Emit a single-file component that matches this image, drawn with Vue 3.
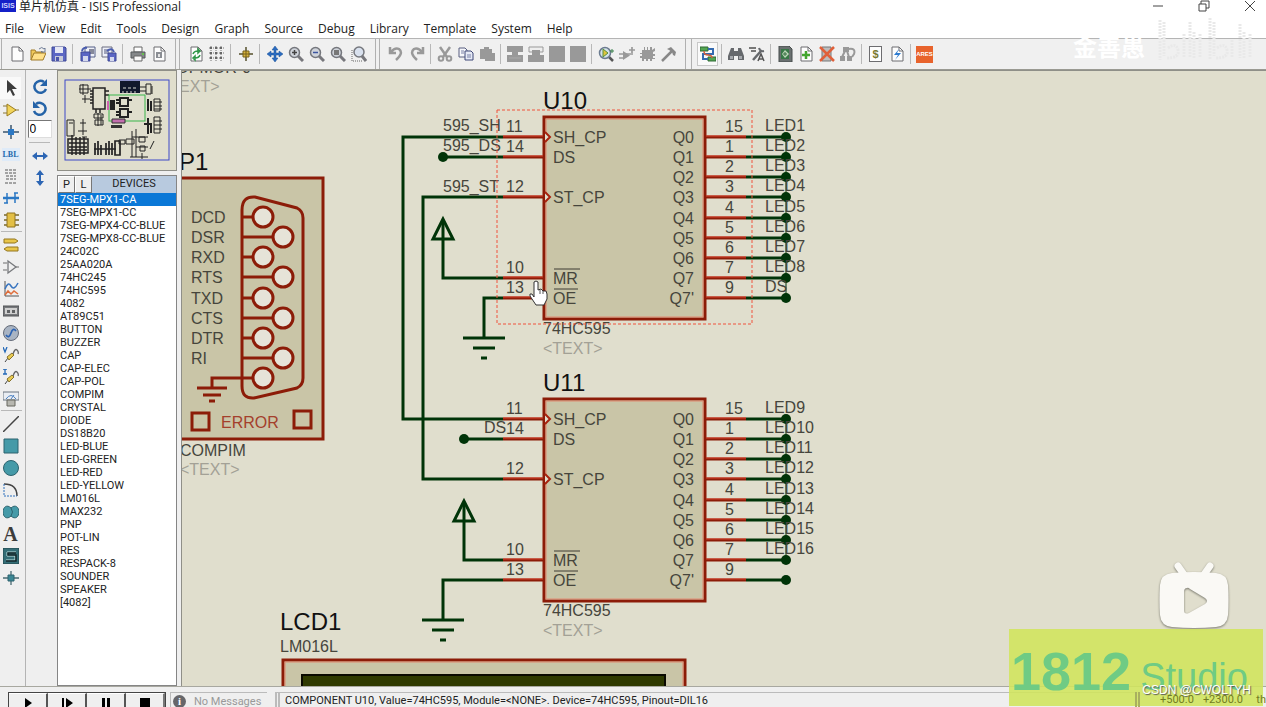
<script setup>
import { ref } from 'vue'

const menus = ['File', 'View', 'Edit', 'Tools', 'Design', 'Graph', 'Source', 'Debug', 'Library', 'Template', 'System', 'Help']

const page = '<path d="M3 1h7l4 4v10H3z" fill="#fdfdfd" stroke="#6d6d70"/><path d="M10 1v4h4" fill="none" stroke="#6d6d70"/>'
const lens = '<path d="M10 10l5 5" stroke="#77777c" stroke-width="3"/><circle cx="6.500" cy="6.500" r="5" fill="#cfd3da" stroke="#75777d" stroke-width="1.500"/>'
const icons = {
  new: page,
  open: '<path d="M1 14V4h4l1 2h7v2" fill="#f0c95a" stroke="#a07a28"/><path d="M1 14l3-7h12l-3 7z" fill="#ffe08a" stroke="#a07a28"/><path d="M9 3q3-3 5 0l1-1v4h-4l1-1" fill="none" stroke="#6f7c96"/>',
  save: '<path d="M1 1h13l1 1v13H1z" fill="#5b66c4" stroke="#3f4895"/><path d="M4 1h8v6H4z" fill="#e6e8f4"/><path d="M4 10h8v5H4z" fill="#c7cad8"/><path d="M5 11h3v4H5z" fill="#4b55a8"/>',
  import: '<path d="M5 1h10v10H5z" fill="#eef0f8" stroke="#555e86"/><path d="M9 3h5v5H9z" fill="#86899a"/><path d="M1 6h9v9H1z" fill="#5b66c4" stroke="#3f4895"/><path d="M3 10h5v5H3z" fill="#d5d9ee"/><path d="M2 5q1-4 5-3" fill="none" stroke="#4a5cae" stroke-width="2"/>',
  export: '<path d="M1 1h10v10H1z" fill="#eef0f8" stroke="#6a6d80"/><path d="M3 3h5v5H3z" fill="#9fa3ba"/><path d="M7 7h8v8H7z" fill="#5b66c4" stroke="#3f4895"/><path d="M9 11h4v4H9z" fill="#d5d9ee"/><path d="M6 5q5-4 7 1" fill="none" stroke="#4a5cae" stroke-width="2"/>',
  print: '<path d="M4 1h8v5H4z" fill="#fff" stroke="#666"/><path d="M1 6h14v6H1z" fill="#85888a" stroke="#55585a"/><path d="M4 10h8v5H4z" fill="#fafafa" stroke="#666"/><path d="M12 7h2v2h-2z" fill="#66c04e"/>',
  area: page + '<path d="M5 6h6v6H5z" fill="#8b8e94"/><path d="M7 8h2v3H7z" fill="#e4e4e4"/>',
  refresh: page + '<path d="M5 8q1-3 5-3M10 3v4l2-2zM12 9q-1 3-5 3M7 10v4l-2-2z" fill="none" stroke="#2f9648" stroke-width="1.500"/>',
  grid: '<path d="M2 0v16M7 0v16M12 0v16M0 2h16M0 7h16M0 12h16" stroke="#777" stroke-dasharray="1 1" stroke-width="1"/><path d="M1 1h2v2H1zM6 1h2v2H6zM11 1h2v2h-2zM1 6h2v2H1zM6 6h2v2H6zM11 6h2v2h-2zM1 11h2v2H1zM6 11h2v2H6zM11 11h2v2h-2z" fill="#666"/>',
  origin: '<path d="M8 1v14M1 8h14" stroke="#55502c" stroke-width="1.500"/><path d="M5 5h6v6H5z" fill="#d8b43c" stroke="#77601c"/><path d="M8 5v6M5 8h6" stroke="#77601c"/>',
  pan: '<path d="M8 0l3 4H9v3h3V5l4 3-4 3V9H9v3h2l-3 4-3-4h2V9H4v2L0 8l4-3v2h3V4H5z" fill="#2a6bc0" stroke="#1f5499" stroke-width=".5"/>',
  zoomin: lens + '<path d="M4 6.500h5M6.500 4v5" stroke="#444" stroke-width="1.500"/>',
  zoomout: lens + '<path d="M4 6.500h5" stroke="#3c55a0" stroke-width="1.500"/>',
  zoomall: lens + '<path d="M4 4h5v5H4z" fill="#777"/>',
  zoomarea: '<path d="M1 4v11h10" fill="none" stroke="#666" stroke-dasharray="1 1"/><path d="M11 10l4 5" stroke="#77777c" stroke-width="3"/><circle cx="8" cy="6" r="5" fill="#d9e1ee" stroke="#75777d" stroke-width="1.500"/>',
  undo: '<path d="M2 1v6h6M3 6q4-5 8-3 5 4-3 11" fill="none" stroke="#999" stroke-width="2.500"/>',
  redo: '<path d="M14 1v6H8M13 6Q9 1 5 3q-5 4 3 11" fill="none" stroke="#999" stroke-width="2.500"/>',
  cut: '<path d="M3 1l7 10M13 1L6 11" stroke="#999" stroke-width="2.500"/><circle cx="4" cy="12.500" r="2.300" fill="none" stroke="#999" stroke-width="2"/><circle cx="12" cy="12.500" r="2.300" fill="none" stroke="#999" stroke-width="2"/>',
  copy: '<path d="M1 2h6l2 2v7H1z" fill="#f6f7fb" stroke="#585f80"/><path d="M7 5h6l2 2v7H7z" fill="#e6eaf6" stroke="#3f4878"/><path d="M3 5h3M3 7h3M9 9h4M9 11h4" stroke="#7a82a8"/>',
  paste: '<path d="M1 3h4V1h5v2h3v4h3v8H6v-2H1z" fill="#999"/>',
  blockcopy: '<path d="M0 0h16v6h-5v3h5v7H0V9h5V6H0z" fill="#999"/><path d="M2 12h12" stroke="#aaa"/>',
  blockmove: '<path d="M1 1h14v5H1z" fill="#eee" stroke="#999"/><path d="M4 4h8v5H4zM0 9h16v7H0z" fill="#999"/>',
  block: '<path d="M0 0h16v16H0z" fill="#999"/>',
  pick: '<path d="M11 11l4 4" stroke="#555" stroke-width="2.500"/><circle cx="7" cy="7" r="5.500" fill="#d5e2ea" stroke="#6b7b90" stroke-width="1.500"/><path d="M5 3v8l5-4z" fill="#e0c43c" stroke="#568f3c"/><path d="M12 5h4M14 3v4" stroke="#39804a"/>',
  make: '<path d="M4 5v9l7-4.500z" fill="#999"/><path d="M0 8h14M0 12h5M10 4h6M13 1v6" stroke="#999" stroke-width="1.700"/>',
  chip: '<path d="M2 4h2V1h1v3h2V1h1v3h2V1h2v3l3-2v3l-2 1v2h2v2h-2v2h2v1h-3v2h-2v-2H8v2H6v-2H4v2H2v-3H0v-2h2v-2H0V7h2z" fill="#999"/>',
  hammer: '<path d="M1 15L11 5" stroke="#888" stroke-width="2.500"/><path d="M6 3l4-2 5 5-1 4-2-1-1-3-3-2z" fill="#888"/>',
  wire: '<path d="M0 1h8v4H0zM8 11h8v4H8z" fill="#54a552" stroke="#2e6a34"/><path d="M8 3h5v5H3v5h5" fill="none" stroke="#356bb0" stroke-width="2"/><path d="M4 5q0 4 4 4t4 3" fill="none" stroke="#d2603c" stroke-width="1.500"/>',
  find: '<path d="M3 2h3v3h4V2h3l3 8v4h-6v-4H6v4H0v-4z" fill="#66696d"/><path d="M2 10h3v3H2zM11 10h3v3h-3z" fill="#a6a9ad"/>',
  prop: '<path d="M0 2h7M2 5h5" stroke="#777" stroke-width="2"/><path d="M4 14l8-9" stroke="#66696d" stroke-width="2.500"/><path d="M10 2q1 4 5 3" fill="none" stroke="#66696d" stroke-width="2"/><path d="M9 15l3-7 3 7M10 13h4" fill="none" stroke="#555" stroke-width="1.500"/>',
  sheet: '<path d="M2 0h10l3 3v13H2z" fill="#6a7070" stroke="#474d4c"/><path d="M4 3h8v10H4z" fill="#387848"/><path d="M5 8l3-4 4 4-4 4z" fill="#bcd7b8"/><path d="M6 8h4M8 6v4" stroke="#376d42"/>',
  addsheet: page + '<path d="M4 9h8M8 5v8" stroke="#43a530" stroke-width="2.500"/>',
  delsheet: '<path d="M3 1h9v14H3z" fill="#bdbdbd" stroke="#777"/><path d="M1 1l14 14M15 1L1 15" stroke="#e0603a" stroke-width="2.500"/>',
  tree: '<path d="M3 1h6v5H3zM0 10h5v5H0zM7 10h5v5H7z" fill="#999"/><path d="M5 5l-3 6M7 5l2 6M9 3q7-1 5 5l-2 3" fill="none" stroke="#999" stroke-width="2"/>',
  erc: page + '<path d="M10 3L5 9h4l-3 5 6-7H8z" fill="#2c7bd0"/>',
  cursor: '<path d="M4 0v13l3-3 3 6 2-1-3-6h5z" fill="#3c3c3c"/>',
  component: '<path d="M0 4h4M0 11h4M12 8h4" stroke="#8a7634"/><path d="M4 2v12l9-6z" fill="#f2d45a" stroke="#9a7c20"/>',
  junction: '<path d="M8 1v14M0 8h16" stroke="#3b556d" stroke-width="1.500"/><path d="M5 5h6v6H5z" fill="#2b78c4"/>',
  script: '<path d="M2 2h12M2 5h12M3 8h10M3 11h10M2 15h12" stroke="#8b8b8b" stroke-width="1.700" stroke-dasharray="3 1"/>',
  bus: '<path d="M0 8h16" stroke="#2b78c4" stroke-width="2.500"/><path d="M4 3v10M12 3v10M1 13h4M11 3h4" stroke="#2b78c4" stroke-width="1.500"/>',
  sub: '<path d="M1 3h3M1 8h3M1 13h3M12 3h4M12 8h4M12 13h4" stroke="#7b6a2a" stroke-width="1.500"/><path d="M4 1h8v14H4z" fill="#e3bf45" stroke="#917420"/>',
  terminal: '<path d="M1 2h11l3 2-3 2H1zM4 10h11v4H4l-3-2z" fill="#e9c64a" stroke="#94771f"/>',
  pin: '<path d="M0 4h4M0 11h4M12 8h4" stroke="#999" stroke-width="1.500"/><path d="M5 2v12l8-6z" fill="none" stroke="#77797c" stroke-width="1.300"/>',
  graph: '<path d="M2 0v15h14" fill="none" stroke="#555"/><path d="M2 8q3-8 6-3t7-3" fill="none" stroke="#3875c0" stroke-width="1.500"/><path d="M2 14l3-4 3 3 3-3 4 3" fill="none" stroke="#df6e3c" stroke-width="1.500"/>',
  tape: '<path d="M0 3h16v10H0z" fill="#77797c" stroke="#505254"/><path d="M2 5h12v6H2z" fill="#d0d0d0"/><path d="M4 7h3v3H4zM9 7h3v3H9z" fill="#606264"/>',
  generator: '<circle cx="8" cy="8" r="7.500" fill="#a9b4c3" stroke="#646b78"/><path d="M3 10q3 4 5-2t5-2" fill="none" stroke="#2b63b4" stroke-width="1.700"/>',
  voltage: '<path d="M0 0l2 5 2-5" fill="none" stroke="#2268b8" stroke-width="1.300"/><path d="M2 15l3-4" stroke="#444"/><path d="M4 10l5-4 2 2-5 5z" fill="#e8ca52" stroke="#88732a"/><path d="M10 7q2-6 4-4t1 4" fill="none" stroke="#666" stroke-width="1.300"/>',
  current: '<path d="M0 0h4M2 0v5M0 5h4" fill="none" stroke="#2268b8" stroke-width="1.300"/><path d="M2 15l3-4" stroke="#444"/><path d="M4 10l5-4 2 2-5 5z" fill="#e8ca52" stroke="#88732a"/><path d="M10 7q2-6 4-4t1 4" fill="none" stroke="#666" stroke-width="1.300"/>',
  meter: '<path d="M0 1h16v8H0z" fill="#e9edf3" stroke="#6b7480"/><path d="M3 8q5-7 10 0M8 8l3-4" fill="none" stroke="#4a80c2"/><path d="M4 9h8v6H4z" fill="#b7b7b0" stroke="#66665f"/>',
  line: '<path d="M0 16L16 0" stroke="#444" stroke-width="1.500"/>',
  box: '<path d="M1 1h14v14H1z" fill="#459aa8" stroke="#2d636e"/>',
  circle: '<circle cx="8" cy="8" r="7.500" fill="#459aa8" stroke="#2d636e"/>',
  arc: '<path d="M1 2q13 0 13 12" fill="none" stroke="#444" stroke-width="1.500"/><path d="M1 2v12h13" fill="none" stroke="#2f70bc" stroke-dasharray="2 1"/>',
  path: '<path d="M8 4C4 0 0 3 0 8s4 8 8 4c4 4 8 1 8-4s-4-8-8-4z" fill="#459aa8" stroke="#2d636e"/><path d="M8 4q3 4 0 8" fill="none" stroke="#2d636e"/>',
  symbol: '<path d="M0 0h16v16H0z" fill="#356e77" stroke="#23474d"/><path d="M13 4H4v4h8v4H3" fill="none" stroke="#bfe0e0" stroke-width="1"/><path d="M13 5H5v2h8v6H3" fill="none" stroke="#14292c" stroke-width="1.500"/>',
  marker: '<path d="M8 1v14M0 8h16" stroke="#4b6b73" stroke-width="1.300"/><path d="M5 5h6v6H5z" fill="#3c8794" stroke="#2d636e"/>',
  cw: '<path d="M14 10a6 6 0 1 1-2-7" fill="none" stroke="#2563a8" stroke-width="2.500"/><path d="M15 0v7H8z" fill="#2563a8"/>',
  ccw: '<path d="M2 10a6 6 0 1 0 2-7" fill="none" stroke="#2563a8" stroke-width="2.500"/><path d="M1 0v7h7z" fill="#2563a8"/>',
  flipx: '<path d="M0 8l5-4v3h6V4l5 4-5 4V9H5v3z" fill="#2d66b4"/>',
  flipy: '<path d="M8 0l4 5H9v6h3l-4 5-4-5h3V5H4z" fill="#2d66b4"/>',
}
const glyphs = { bom: '$', ares: 'ARES', label: 'LBL', text: 'A' }

const toolbars = [
  { name: 'File', groups: [['new', 'open', 'save'], ['import', 'export'], ['print', 'area']] },
  { name: 'View', groups: [['refresh', 'grid'], ['origin'], ['pan', 'zoomin', 'zoomout', 'zoomall', 'zoomarea']] },
  { name: 'Edit', tight: true, groups: [['undo', 'redo'], ['cut', 'copy', 'paste'], ['blockcopy', 'blockmove', 'block', 'block'], ['pick', 'make', 'chip', 'hammer']] },
  { name: 'Design', tight: true, groups: [['wire'], ['find', 'prop'], ['sheet', 'addsheet', 'delsheet', 'tree'], ['bom', 'erc'], ['ares']] },
]
const modes = [
  ['cursor', 'component', 'junction', 'label', 'script', 'bus', 'sub'],
  ['terminal', 'pin', 'graph', 'tape', 'generator', 'voltage', 'current', 'meter'],
  ['line', 'box', 'circle', 'arc', 'path', 'text', 'symbol', 'marker'],
]
const devices = ['7SEG-MPX1-CA', '7SEG-MPX1-CC', '7SEG-MPX4-CC-BLUE', '7SEG-MPX8-CC-BLUE', '24C02C', '25AA020A', '74HC245', '74HC595', '4082', 'AT89C51', 'BUTTON', 'BUZZER', 'CAP', 'CAP-ELEC', 'CAP-POL', 'COMPIM', 'CRYSTAL', 'DIODE', 'DS18B20', 'LED-BLUE', 'LED-GREEN', 'LED-RED', 'LED-YELLOW', 'LM016L', 'MAX232', 'PNP', 'POT-LIN', 'RES', 'RESPACK-8', 'SOUNDER', 'SPEAKER', '[4082]']
const selected = ref('7SEG-MPX1-CA')
const angle = ref('0')

const rows = [0, 20, 40, 60, 81, 101, 121, 141, 161]
const outPins = ['15', '1', '2', '3', '4', '5', '6', '7', '9']
const outNames = ['Q0', 'Q1', 'Q2', 'Q3', 'Q4', 'Q5', 'Q6', 'Q7', "Q7'"]
const inPins = [
  { row: 0, num: '11', name: 'SH_CP', clock: true },
  { row: 1, num: '14', name: 'DS' },
  { row: 3, num: '12', name: 'ST_CP', clock: true },
  { row: 7, num: '10', name: 'MR', bar: 26 },
  { row: 8, num: '13', name: 'OE', bar: 24 },
]
const chips = [
  { ref: 'U10', y: 137, nets: ['LED1', 'LED2', 'LED3', 'LED4', 'LED5', 'LED6', 'LED7', 'LED8', 'DS'] },
  { ref: 'U11', y: 419, nets: ['LED9', 'LED10', 'LED11', 'LED12', 'LED13', 'LED14', 'LED15', 'LED16', ''] },
]
const serial = ['DCD', 'DSR', 'RXD', 'RTS', 'TXD', 'CTS', 'DTR', 'RI', ''].map((name, i) => ({
  name,
  y: 217 + rows[i],
  x: i % 2 ? 283 : 263,
}))
const grounds = [{ x: 484, y: 338 }, { x: 443, y: 620 }]
const powers = [{ x: 443, y: 218 }, { x: 464, y: 500 }]
const strokes = ['M1160 20v40', 'M1164 22v34', 'M1168 48q8-6 10 2t-12 8', 'M1184 34v24', 'M1190 22v36', 'M1194 32v26', 'M1200 34v24', 'M1210 18v42', 'M1214 22v34', 'M1217 48q8-6 10 2t-12 8', 'M1232 40v18', 'M1240 24v34', 'M1244 32v26', 'M1250 34v24']
</script>

<template>
  <div class="app">
    <header class="title">
      <span class="logo">ISIS</span>
      <h1>单片机仿真 - ISIS Professional</h1>
      <div class="controls">
        <button aria-label="Minimize"><svg viewBox="0 0 14 14"><path d="M2 6h10" /></svg></button>
        <button aria-label="Restore"><svg viewBox="0 0 14 14"><path d="M2 4h7v7H2zM4 4V1h8v7H9" /></svg></button>
        <button aria-label="Close"><svg viewBox="0 0 14 14"><path d="M2 1l10 10M12 1L2 11" /></svg></button>
      </div>
    </header>

    <nav class="menu">
      <button v-for="m in menus" :key="m">{{ m }}</button>
    </nav>

    <div class="toolbars">
      <div v-for="bar in toolbars" :key="bar.name" class="bar" :class="{ tight: bar.tight }" role="toolbar" :aria-label="bar.name">
        <div v-for="(g, gi) in bar.groups" :key="gi" class="group">
          <button v-for="(n, i) in g" :key="i" class="tool" :class="{ pressed: n === 'wire' }" :aria-label="n">
            <svg v-if="icons[n]" viewBox="0 0 16 16" v-html="icons[n]" />
            <span v-else class="glyph" :class="n">{{ glyphs[n] }}</span>
          </button>
        </div>
      </div>
    </div>

    <main class="work">
      <aside class="modes">
        <div v-for="(g, gi) in modes" :key="gi" class="mode-group">
          <button v-for="n in g" :key="n" class="mode" :class="{ pressed: n === 'cursor' }" :aria-label="n">
            <svg v-if="icons[n]" viewBox="0 0 16 16" v-html="icons[n]" />
            <span v-else class="glyph" :class="n">{{ glyphs[n] }}</span>
          </button>
        </div>
      </aside>

      <aside class="orient">
        <button aria-label="Rotate clockwise"><svg viewBox="0 0 16 16" v-html="icons.cw" /></button>
        <button aria-label="Rotate anticlockwise"><svg viewBox="0 0 16 16" v-html="icons.ccw" /></button>
        <input v-model="angle" aria-label="Rotation angle" />
        <hr />
        <button aria-label="Mirror horizontally"><svg viewBox="0 0 16 16" v-html="icons.flipx" /></button>
        <button aria-label="Mirror vertically"><svg viewBox="0 0 16 16" v-html="icons.flipy" /></button>
      </aside>

      <aside class="side">
        <div class="overview">
          <svg viewBox="0 0 118 98">
            <rect x="7" y="9" width="104" height="80" fill="none" stroke="#3c48c8" />
            <g fill="none" stroke="#222" stroke-width="1">
              <path d="M22 14h8v8h-8zM25 13v11M21 18h12M27 24v8M24 28h8" />
              <path d="M35 17h12v21H35zM32 20h3M32 23h3M32 26h3M32 29h3M32 32h3M38 38v4M42 38v4M47 20h4M47 24h4" stroke-width="1.500" />
              <path d="M88 13h5v10h-5zM81 16h7M81 20h7M94 15v8" />
              <path d="M62 27h8v8h-8zM62 38h8v8h-8zM58 29h4M58 32h4M58 41h4M58 44h4M70 29h4M70 41h4" stroke-width="2" />
              <path d="M90 28v12M93 30v10M90 47v16M93 52v10M86 53h6" stroke-width="2" />
              <path d="M96 28h6v12h-6zM96 46h6v16h-6zM96 31h8M96 35h8M96 38h8M96 50h8M96 54h8M96 58h8" stroke-width="1" />
              <path d="M36 43h9v4h-9zM37 49h8v5h-8zM40 42v13M43 44v10" />
              <path d="M9 49h7v16H9zM11 52h4M22 52h6M25 48v16M20 60h9M24 66h5" />
              <path d="M10 68h20v14H10zM11 72h18M11 76h18M11 79h18M14 64v20M18 66v18M22 66v18M26 66v18" stroke-width="1.500" />
              <path d="M37 72v12M40 70v14M43 74v10M48 72v12M51 70v14M54 72v12M36 78h22M57 70h5v14h-5z" stroke-width="1.700" />
              <path d="M61 69h6v4h-6zM68 68h8v5h-8zM74 60v26M78 58v28M74 66h16M78 76h12M81 66h6v5h-6zM82 75h5v5h-5zM72 86h18M84 82v6M92 78l4-8" />
            </g>
            <path d="M62 10h20v12H62z" fill="#11182c" />
            <path d="M65 17h3M70 17h3M75 17h3M64 21h2M68 21h2M72 21h2M76 21h2" stroke="#d8d8d0" />
            <path d="M52 29h5v10h-5z" fill="#222" />
            <rect x="51" y="24" width="36" height="26" fill="none" stroke="#39b54a" />
            <path d="M50 30v9" stroke="#cf62b2" stroke-width="2" />
            <path d="M54 48h13v4H54z" fill="#c26fae" stroke="#333" />
            <path d="M53 54h11v3H53z" fill="#333" />
          </svg>
        </div>
        <section class="devices">
          <div class="devices-head">
            <button>P</button>
            <button>L</button>
            <h2>DEVICES</h2>
          </div>
          <ul role="listbox" aria-label="Devices">
            <li v-for="d in devices" :key="d" role="option" :aria-selected="d === selected" :class="{ on: d === selected }" @click="selected = d">{{ d }}</li>
          </ul>
        </section>
      </aside>

      <section class="canvas">
        <svg class="sheet">
          <g transform="translate(-182 -71)">
            <text class="net" x="251" y="73" text-anchor="end">COPMOR-0</text>
            <text class="ghost" x="160" y="92">&lt;TEXT&gt;</text>

            <text class="ref" x="179" y="170">P1</text>
            <rect class="body" x="170" y="178" width="153" height="261" />
            <path class="pin" fill="none" d="M242 386V210q0-14 13-13l42 11q6 3 6 10v160q0 7-6 10l-43 10q-12 1-12-12z" />
            <g v-for="s in serial" :key="s.y">
              <path class="pin" :d="`M242 ${s.y}H${s.x - 10}`" />
              <circle class="hole" :cx="s.x" :cy="s.y" r="10" />
              <text class="net" x="191" :y="s.y + 6">{{ s.name }}</text>
            </g>
            <path class="pin" fill="none" d="M242 378H212V388M197 388h30M203 395h18M209 401h6" />
            <rect class="body" x="192" y="413" width="17" height="17" />
            <rect class="body" x="294" y="411" width="17" height="17" />
            <text class="error" x="221" y="428">ERROR</text>
            <text class="net" x="180" y="456">COMPIM</text>
            <text class="ghost" x="180" y="475">&lt;TEXT&gt;</text>

            <path class="wire" d="M503 137H403V419H503M503 197H423V479H503M443 157H503M464 439H503" />
            <path class="wire" d="M443 220V278H503M503 298H484V338M464 502V560H503M503 580H443V620" />
            <path v-for="g in grounds" :key="g.x" class="wire" :d="`M${g.x - 21} ${g.y}h42M${g.x - 11} ${g.y + 10}h22M${g.x - 3} ${g.y + 20}h6`" />
            <path v-for="p in powers" :key="p.x" class="wire" :d="`M${p.x} ${p.y + 1}l-10 20h20z`" />
            <circle class="dot" cx="443" cy="157" r="5" />
            <circle class="dot" cx="464" cy="439" r="5" />
            <text class="net" x="443" y="131">595_SH</text>
            <text class="net" x="443" y="151">595_DS</text>
            <text class="net" x="443" y="192">595_ST</text>
            <text class="net" x="484" y="433">DS</text>
            <path class="thin" d="M786 137V298M786 419V560" />

            <g v-for="c in chips" :key="c.ref">
              <text class="ref" x="543" :y="c.y - 28">{{ c.ref }}</text>
              <rect class="body" x="544" :y="c.y - 20" width="161" height="202" />
              <rect class="glow" x="546" :y="c.y - 18" width="157" height="198" />
              <g v-for="p in inPins" :key="p.num">
                <path class="pin" :d="`M503 ${c.y + rows[p.row]}H543`" />
                <path class="shine" :d="`M503 ${c.y + rows[p.row] - 1}H543`" />
                <path v-if="p.clock" class="clock" :d="`M545 ${c.y + rows[p.row] - 5}l5 5-5 5`" />
                <text class="net" x="506" :y="c.y + rows[p.row] - 5">{{ p.num }}</text>
                <text class="net" x="553" :y="c.y + rows[p.row] + 6">{{ p.name }}</text>
                <path v-if="p.bar" class="over" :d="`M554 ${c.y + rows[p.row] - 9}h${p.bar}`" />
              </g>
              <g v-for="(r, i) in rows" :key="r">
                <path class="pin" :d="`M706 ${c.y + r}H746`" />
                <path class="shine" :d="`M706 ${c.y + r - 1}H746`" />
                <path class="wire" :d="`M746 ${c.y + r}H786`" />
                <circle class="dot" cx="786" :cy="c.y + r" r="5" />
                <text class="net" x="725" :y="c.y + r - 5">{{ outPins[i] }}</text>
                <text class="net" x="694" :y="c.y + r + 6" text-anchor="end">{{ outNames[i] }}</text>
                <text class="net" x="765" :y="c.y + r - 6">{{ c.nets[i] }}</text>
              </g>
              <text class="net" x="543" :y="c.y + 197">74HC595</text>
              <text class="ghost" x="543" :y="c.y + 217">&lt;TEXT&gt;</text>
            </g>
            <rect class="select" x="497" y="110" width="255" height="214" />

            <text class="ref" x="280" y="630">LCD1</text>
            <text class="net" x="280" y="652">LM016L</text>
            <rect class="body" x="283" y="660" width="402" height="160" />
            <rect class="glow" x="285" y="662" width="398" height="156" />
            <rect x="302" y="675" width="363" height="60" fill="#2f3a00" stroke="#0a0a00" stroke-width="2" />

            <path d="M534 282q2-2 4 0v8l3-1 2 2 3 0 1 3v5l-3 6h-8l-6-9q-1-3 2-2l2 3z" fill="#fff" stroke="#333" />
            <path d="M540 290v4M543 291v3" stroke="#555" />
          </g>
        </svg>
      </section>
    </main>

    <footer class="status">
      <div class="sim">
        <button aria-label="Play"><svg viewBox="0 0 16 12"><path d="M5 1l7 5-7 5z" /></svg></button>
        <button aria-label="Step"><svg viewBox="0 0 16 12"><path d="M3 1h2v10H3zM7 1l7 5-7 5z" /></svg></button>
        <button aria-label="Pause"><svg viewBox="0 0 16 12"><path d="M4 1h3v10H4zM9 1h3v10H9z" /></svg></button>
        <button aria-label="Stop"><svg viewBox="0 0 16 12"><path d="M3 1h10v10H3z" /></svg></button>
      </div>
      <div class="messages"><span class="info">i</span>No Messages</div>
      <div class="hint">COMPONENT U10, Value=74HC595, Module=&lt;NONE&gt;. Device=74HC595, Pinout=DIL16</div>
      <div class="coords"><span>+500.0</span><span>+2300.0</span><span class="unit">th</span></div>
    </footer>

    <div class="channel">
      <span>金善愚</span>
    </div>
    <svg class="scribble" viewBox="1156 16 100 46"><path v-for="s in strokes" :key="s" :d="s" /></svg>
    <svg class="tv" viewBox="0 0 76 72">
      <path d="M22 7l7 10M54 7l-7 10" stroke="#faf9f5" stroke-width="7" stroke-linecap="round" />
      <path fill-rule="evenodd" fill="#faf9f5" d="M16 14Q38 12 60 14Q71 15 72 26Q73 41 72 56Q71 67 60 68Q38 70 16 68Q5 67 4 56Q3 41 4 26Q5 15 16 14zM31 29Q28 29 28 33V51Q28 56 33 54L49 45Q53 42 49 39L34 30Q32 28 31 29z" />
    </svg>
    <div class="studio"><b>1812</b><span>Studio</span></div>
    <div class="credit">CSDN @CWOLTYH</div>
  </div>
</template>

<style>
body { margin: 0; overflow: hidden; }
</style>

<style scoped>
.app { position: relative; display: flex; flex-direction: column; height: 100vh; overflow: hidden; background: #efefef; color: #222; font-family: "Liberation Sans", "Noto Sans CJK SC", sans-serif; font-size: 12px; }
button { padding: 0; border: 0; background: none; font: inherit; color: inherit; }
h1, h2, ul { margin: 0; padding: 0; font-weight: 400; }

.title { display: flex; align-items: flex-start; height: 18px; background: #fff; font-family: "Open Sans", "Noto Sans CJK SC", sans-serif; }
.logo { width: 16px; height: 12px; background: #1420c8; color: #cfd4ff; font: 700 7px/12px "Liberation Sans", sans-serif; text-align: center; }
.title h1 { flex: 1; margin-left: 3px; font-size: 12px; line-height: 13px; }
.controls { display: flex; gap: 32px; padding-right: 9px; }
.controls button { width: 14px; height: 14px; }
.controls svg { display: block; width: 14px; height: 14px; fill: none; stroke: #444; }

.menu { display: flex; align-items: center; gap: 15px; height: 20px; padding-left: 5px; background: #fff; font-family: "Open Sans", sans-serif; font-size: 12px; }

.toolbars { display: flex; height: 30px; border-top: 1px solid #b4b4b4; border-bottom: 1px solid #9a9a92; background: #f0f0f0; }
.bar { display: flex; align-items: center; padding: 0 6px 0 5px; border-left: 1px solid #b0b0b0; margin-left: 3px; border-right: 1px solid #b0b0b0; }
.bar:first-child { margin-left: 1px; padding-left: 4px; }
.bar.tight + .bar.tight { margin-left: 5px; }
.bar:last-child { border-right: 0; }
.group { display: flex; align-items: center; }
.group + .group::before { content: ""; width: 1px; height: 20px; margin: 0 4px 0 3px; background: #b8b8b8; }
.tight .group + .group::before { margin: 0 3px; }
.tool { display: flex; align-items: center; justify-content: center; width: 21px; height: 24px; }
.tool svg { width: 16px; height: 16px; }
.tool.pressed { border: 1px solid #c8c8c8; box-sizing: border-box; background: #fafafa; }
.glyph { text-align: center; }
.ares { width: 17px; height: 17px; background: #e8632c; color: #fff; font: 700 6px/17px "Liberation Sans", sans-serif; }
.bom { width: 11px; height: 14px; border: 1px solid #6d6d70; background: #fdfdfd; color: #7a7a30; font: 700 11px/14px "Liberation Sans", sans-serif; }
.label { width: 18px; height: 13px; background: #dfebf8; color: #2369ad; font: 700 8px/13px "Liberation Serif", serif; }
.text { width: 18px; height: 22px; color: #3c3c3c; font: 700 20px/22px "Liberation Serif", serif; }

.work { display: flex; flex: 1; min-height: 0; }
.modes { width: 25px; padding-top: 7px; border-right: 1px solid #b4b4b4; }
.mode-group + .mode-group::before { content: ""; display: block; height: 1px; margin: 0 3px 2px 1px; background: #b8b8b8; }
.mode { display: flex; align-items: center; justify-content: center; width: 21px; height: 22px; }
.mode svg { width: 16px; height: 16px; }
.mode.pressed { background: #f9f9f9; }

.orient { display: flex; flex-direction: column; align-items: center; box-sizing: border-box; width: 31px; padding: 6px 4px 0 0; }
.orient button { height: 22px; }
.orient svg { display: block; width: 16px; height: 16px; margin: 3px 0; }
.orient input { box-sizing: border-box; width: 24px; height: 18px; padding: 0 1px; border: 1px solid #777; border-right-color: #ddd; border-bottom-color: #ddd; border-radius: 0; background: #fff; font: 12px "Liberation Sans", sans-serif; }
.orient hr { width: 21px; height: 1px; margin: 4px 0 2px; border: 0; background: #b8b8b8; }

.side { display: flex; flex-direction: column; gap: 4px; width: 120px; margin-right: 4px; }
.overview { height: 99px; border: 1px solid #8f8f88; background: #e0decd; }
.overview svg { display: block; width: 118px; height: 98px; }
.devices { display: flex; flex: 1; flex-direction: column; min-height: 0; border: 1px solid #858585; background: #fff; font-family: Roboto, sans-serif; font-size: 11px; }
.devices-head { display: flex; height: 17px; background: #b8cadf; }
.devices-head button { box-sizing: border-box; width: 17px; border: 1px solid #fff; border-right-color: #777; border-bottom-color: #777; background: #efefef; }
.devices-head h2 { flex: 1; font-size: 11px; line-height: 16px; text-align: center; }
.devices ul { flex: 1; list-style: none; overflow: hidden; }
.devices li { height: 13px; padding-left: 2px; line-height: 13px; white-space: nowrap; }
.devices li.on { background: #0b78d7; color: #fff; }

.canvas { flex: 1; min-width: 0; border-top: 1px solid #8f8f88; border-left: 1px solid #8f8f88; background: #e0decd; box-sizing: border-box; }
.sheet { display: block; width: 100%; height: 100%; overflow: hidden; font-family: "Liberation Sans", sans-serif; }
.net { fill: #46453c; font-size: 16px; }
.ghost { fill: #a3a196; font-size: 16px; }
.ref { fill: #111; font-size: 24px; }
.error { fill: #a4402c; font-size: 16px; }
.body { fill: #c9c5a7; stroke: #8c1c08; stroke-width: 3; }
.glow { fill: none; stroke: #e08a70; stroke-width: 1; }
.pin { stroke: #8c1c08; stroke-width: 3; }
.shine { stroke: #d8402a; stroke-width: 1; }
.clock { fill: #e0decd; stroke: #a8220e; stroke-width: 2; }
.hole { fill: #e6e3d8; stroke: #8c1c08; stroke-width: 3; }
.wire { fill: none; stroke: #003408; stroke-width: 3; }
.thin { stroke: #003408; stroke-width: 1; }
.dot { fill: #003408; }
.over { stroke: #3c3b33; stroke-width: 1; }
.select { fill: none; stroke: #f0523c; stroke-width: 1; stroke-dasharray: 3 2; }

.status { display: flex; box-sizing: border-box; height: 21px; padding: 5px 0 0 8px; border-top: 1px solid #a8a8a0; font-family: Roboto, sans-serif; font-size: 11px; }
.sim { display: flex; border: 1px solid #444; border-bottom: 0; }
.sim button { display: flex; align-items: center; justify-content: center; width: 39px; height: 18px; box-sizing: border-box; border-top: 1px solid #fff; border-right: 2px solid #555; }
.sim button:last-child { border-right-color: #777; }
.sim svg { width: 16px; height: 12px; fill: #000; }
.messages { display: flex; align-items: center; gap: 8px; box-sizing: border-box; width: 97px; margin-left: 4px; padding: 2px 0 0 2px; border-top: 1px solid #bbb; border-left: 1px solid #bbb; color: #999; white-space: nowrap; }
.info { width: 13px; height: 13px; border-radius: 7px; background: #66666a; color: #fff; font: 700 11px/13px "Liberation Serif", serif; text-align: center; }
.hint { flex: 1; margin-left: 8px; padding: 2px 0 0 5px; border-top: 1px solid #bbb; border-left: 5px double #bbb; line-height: 12px; white-space: nowrap; }
.coords { position: relative; z-index: 2; display: flex; gap: 9px; box-sizing: border-box; width: 131px; padding: 2px 0 0 20px; border-left: 5px double #a9b060; color: #727b22; line-height: 12px; }
.unit { margin-left: auto; }

.channel { position: absolute; top: 30px; right: 121px; color: #fff; font: 700 24px/32px "Noto Sans CJK SC", sans-serif; }
.scribble { position: absolute; top: 16px; right: 10px; width: 100px; height: 46px; fill: none; stroke: #e9e9e9; stroke-width: 3; stroke-dasharray: 2 1; }
.tv { position: absolute; right: 34px; bottom: 76px; width: 76px; height: 72px; filter: drop-shadow(0 1px 1px #77776c); }
.studio { position: absolute; right: 3px; bottom: 1px; display: flex; align-items: baseline; gap: 9px; box-sizing: border-box; width: 254px; height: 77px; padding-left: 2px; background: rgb(208 229 92 / 88%); color: #6fcb84; font-family: "Liberation Sans", sans-serif; line-height: 84px; white-space: nowrap; }
.studio b { font-size: 54px; }
.studio span { font-size: 38px; }
.credit { position: absolute; right: 15px; bottom: 9px; color: #fff; font-size: 12px; line-height: 16px; text-shadow: 1px 1px 1px #555; }
</style>
